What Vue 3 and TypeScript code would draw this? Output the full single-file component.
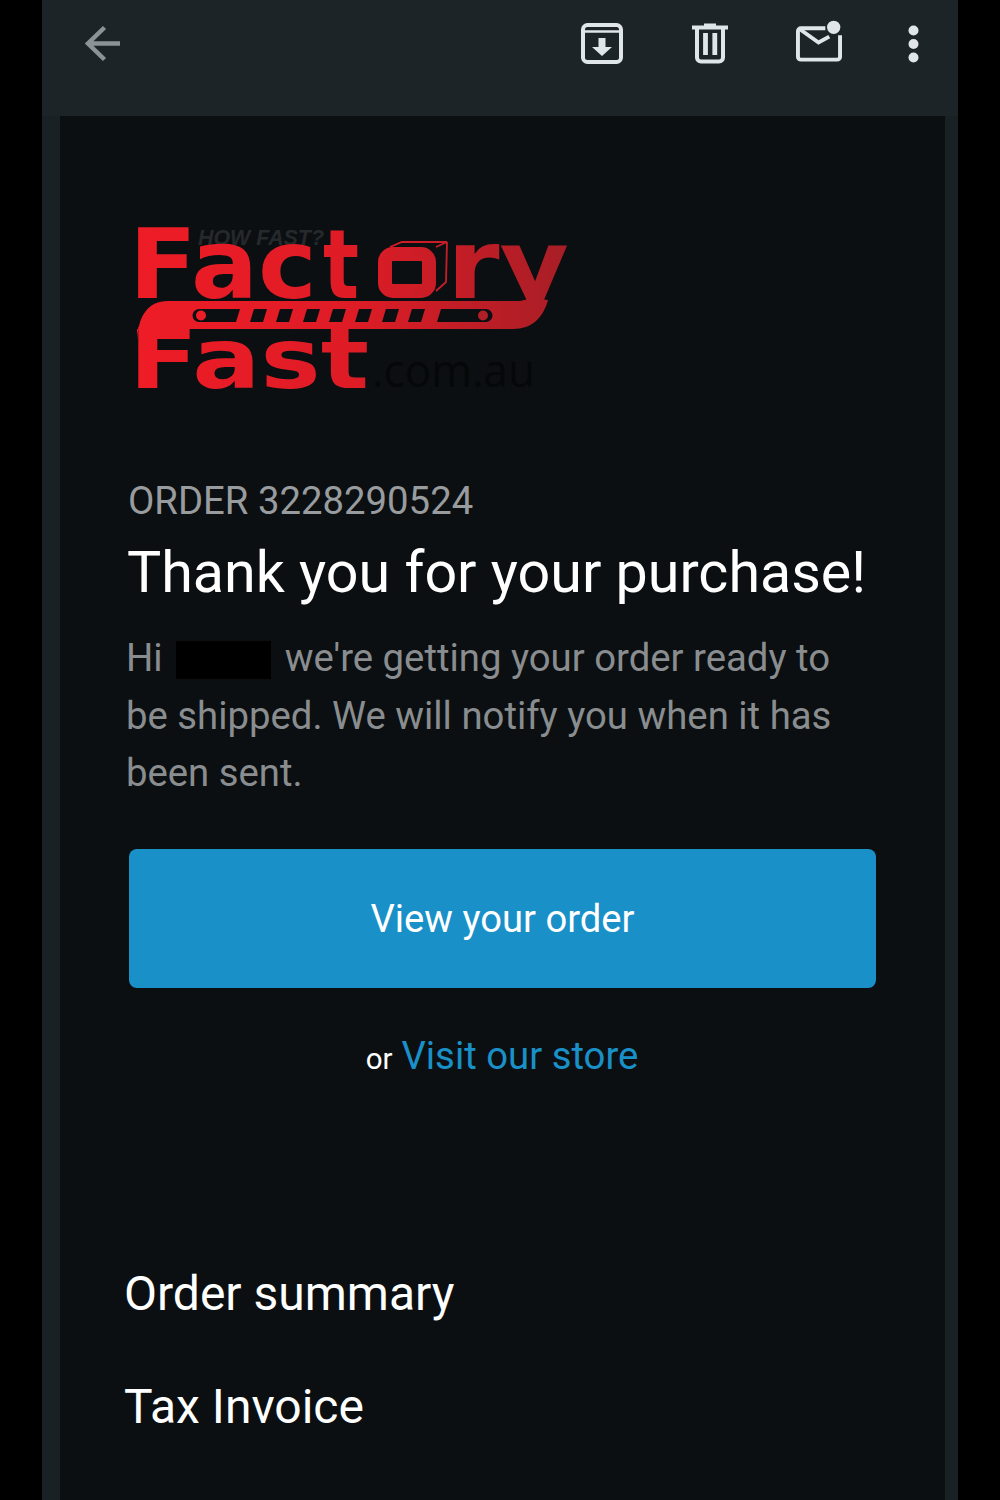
<template>
  <div class="frame">
    <header class="toolbar">
      <svg class="back" width="36" height="44" viewBox="0 0 36 44">
        <path d="M35 23.500H3M19.500 7.500 3 23.500l16.500 16" fill="none" stroke="#8b9396" stroke-width="4.500" />
      </svg>
      <div class="actions">
        <svg width="42" height="44" viewBox="0 0 42 44">
          <rect x="2" y="5" width="38" height="37" rx="4.500" fill="none" stroke="#dfe5e9" stroke-width="4" />
          <path d="M2 11.500h38" stroke="#dfe5e9" stroke-width="2.500" />
          <path d="M17.500 18h7v9h6.500L21 36 11 27h6.500z" fill="#dfe5e9" />
        </svg>
        <svg class="trash-icon" width="37" height="44" viewBox="0 0 37 44">
          <path d="M0 7.500h36M12 5.500h12" fill="none" stroke="#dfe5e9" stroke-width="4" />
          <path d="M5 8v29.500a4 4 0 0 0 4 4h18a4 4 0 0 0 4-4V8" fill="none" stroke="#dfe5e9" stroke-width="4" />
          <path d="M13.500 13v22M22.800 13v22" stroke="#dfe5e9" stroke-width="4.800" />
        </svg>
        <svg class="mail-icon" width="46" height="44" viewBox="0 0 47 44">
          <path d="M30 8H5a3 3 0 0 0-3 3v26a3 3 0 0 0 3 3h37a3 3 0 0 0 3-3V15" fill="none" stroke="#dfe5e9" stroke-width="4" />
          <path d="M4 9 23 22.500 34 16.500" fill="none" stroke="#dfe5e9" stroke-width="4" />
          <circle cx="38.500" cy="7" r="6.800" fill="#dfe5e9" />
        </svg>
        <svg width="11" height="44" viewBox="0 0 11 44">
          <circle cx="5.500" cy="10.500" r="5" fill="#dfe5e9" />
          <circle cx="5.500" cy="24" r="5" fill="#dfe5e9" />
          <circle cx="5.500" cy="37.500" r="5" fill="#dfe5e9" />
        </svg>
      </div>
    </header>

    <div class="gutter">
      <main class="mail">
        <svg class="logo" width="450" height="175" viewBox="130 222 450 175">
          <defs>
            <linearGradient id="red" gradientUnits="userSpaceOnUse" x1="137" y1="0" x2="567" y2="0">
              <stop offset="0" stop-color="#ee1c26" />
              <stop offset="0.5" stop-color="#de1c26" />
              <stop offset="1" stop-color="#a81e26" />
            </linearGradient>
          </defs>
          <text x="198" y="245" class="how" textLength="126" lengthAdjust="spacingAndGlyphs">HOW FAST?</text>
          <text x="129" y="298" class="big" fill="url(#red)" textLength="188" lengthAdjust="spacingAndGlyphs">Fac</text>
          <text x="323" y="298" class="big" fill="url(#red)" textLength="36" lengthAdjust="spacingAndGlyphs">t</text>
          <!-- box standing in for the o -->
          <rect x="385" y="254" width="44" height="37" rx="8" fill="none" stroke="url(#red)" stroke-width="14" />
          <path d="M390 247l12-5h45l-11 5M447 242l-1 40-10 9" fill="none" stroke="url(#red)" stroke-width="1.800" />
          <text x="447" y="298" class="big" fill="url(#red)" textLength="122" lengthAdjust="spacingAndGlyphs">ry</text>
          <path d="M137 345C137 316 148 301 168 301H520L533 298 548 300C543 318 532 329 513 329H137Z" fill="url(#red)" />
          <path d="M199 309H240L236 322H199a6.500 6.500 0 0 1 0-13ZM437 322 441 309H486a6.500 6.500 0 0 1 0 13Z" fill="#0b0f11" />
          <path
            v-for="x in bars"
            :key="x"
            :d="`M${x + 4} 309h13l-4 13h-13Z`"
            fill="#0b0f11"
          />
          <circle cx="201" cy="315.500" r="5" fill="#ee1c26" />
          <circle cx="483" cy="315.500" r="5" fill="#b01e26" />
          <text x="129" y="388" class="big fast" fill="url(#red)" textLength="240" lengthAdjust="spacingAndGlyphs">Fast</text>
          <text x="372" y="387" class="dom" textLength="163" lengthAdjust="spacingAndGlyphs">.com.au</text>
        </svg>

        <p class="order">ORDER 3228290524</p>
        <h1 class="title">Thank you for your purchase!</h1>
        <p class="intro">Hi <span class="redact"></span> we're getting your order ready to be shipped. We will notify you when it has been sent.</p>

        <a class="btn">View your order</a>
        <p class="alt"><span class="or">or</span> <a class="store">Visit our store</a></p>

        <h2 class="section first">Order summary</h2>
        <h2 class="section">Tax Invoice</h2>
      </main>
    </div>
  </div>
</template>

<script setup lang="ts">
const bars: number[] = [250, 276, 303, 329, 355, 382, 408];
</script>

<style>
html,
body {
  margin: 0;
  background: #000;
}
</style>

<style scoped>
.frame {
  width: 916px;
  height: 1500px;
  margin-left: 42px;
  overflow: hidden;
  font-family: Roboto, "Liberation Sans", sans-serif;
  display: flex;
  flex-direction: column;
}
.toolbar {
  height: 116px;
  box-sizing: border-box;
  flex: none;
  display: flex;
  justify-content: space-between;
  align-items: flex-start;
  padding: 20px 39px 0 43px;
  background: #1c2427;
}
.actions {
  display: flex;
  gap: 68px;
}
.trash-icon {
  margin-left: 1px;
  margin-right: -1px;
}
.mail-icon {
  margin-right: -2px;
}
.actions svg,
.back {
  display: block;
}
.gutter {
  flex: 1;
  display: flex;
  padding: 0 13px 0 18px;
  background: #192124;
}
.mail {
  flex: 1;
  background: #0b0f11;
  padding: 106px 69px 0 68px;
  box-sizing: border-box;
}
.logo {
  display: block;
  margin-left: 2px;
}
.order {
  margin: 80px 0 0;
  font-size: 38.300px;
  line-height: 48px;
  color: #999c9e;
}
.title {
  margin: 15px 0 0 -1px;
  font-size: 57.400px;
  line-height: 66px;
  font-weight: 400;
  color: #fff;
  white-space: nowrap;
}
.intro {
  margin: 23px 0 0 -2px;
  font-size: 38.300px;
  line-height: 57.700px;
  color: #8a8d8f;
}
.redact {
  display: inline-block;
  width: 95px;
  height: 38px;
  margin: 0 4px;
  background: #000;
  vertical-align: -8px;
}
.btn {
  display: flex;
  align-items: center;
  justify-content: center;
  width: 747px;
  height: 139px;
  margin: 47px 0 0 1px;
  border-radius: 8px;
  background: #1a90c8;
  color: #fff;
  font-size: 38.200px;
}
.alt {
  margin: 44px 0 0;
  text-align: center;
  line-height: 48px;
  color: #fff;
}
.or {
  font-size: 29.500px;
}
.store {
  font-size: 38.300px;
  margin-left: 5px;
  color: #1a90c8;
}
.section {
  margin: 0 0 0 -4px;
  font-size: 48px;
  line-height: 56px;
  font-weight: 400;
  color: #fff;
  padding-top: 57px;
}
.section.first {
  padding-top: 0;
  margin-top: 178px;
}
.how {
  font: italic 700 22px "Liberation Sans", sans-serif;
  fill: #26292c;
}
.big {
  font: 700 96px "DejaVu Sans", sans-serif;
}
.fast {
  font-size: 84px;
}
.dom {
  font: 400 46px "Open Sans", sans-serif;
  fill: #050708;
}
</style>
